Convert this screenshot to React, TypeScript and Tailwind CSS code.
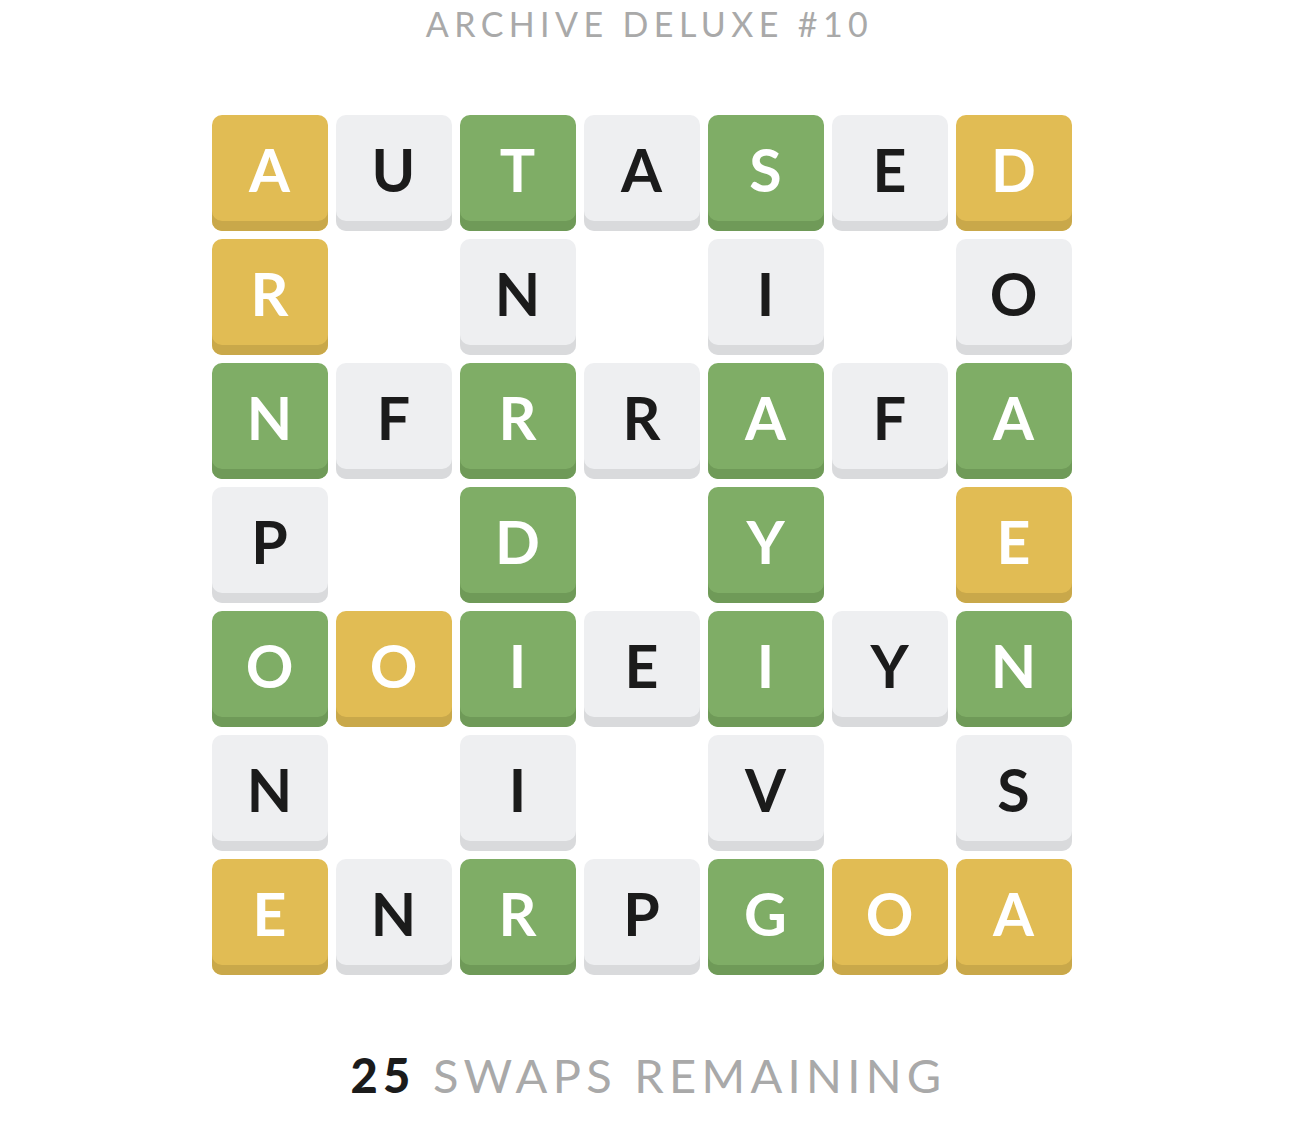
import React from 'react';

type Tone = 'y' | 'g' | 'G' | '';

const rows: [string, Tone][][] = [
  [['A', 'y'], ['U', 'g'], ['T', 'G'], ['A', 'g'], ['S', 'G'], ['E', 'g'], ['D', 'y']],
  [['R', 'y'], ['', ''], ['N', 'g'], ['', ''], ['I', 'g'], ['', ''], ['O', 'g']],
  [['N', 'G'], ['F', 'g'], ['R', 'G'], ['R', 'g'], ['A', 'G'], ['F', 'g'], ['A', 'G']],
  [['P', 'g'], ['', ''], ['D', 'G'], ['', ''], ['Y', 'G'], ['', ''], ['E', 'y']],
  [['O', 'G'], ['O', 'y'], ['I', 'G'], ['E', 'g'], ['I', 'G'], ['Y', 'g'], ['N', 'G']],
  [['N', 'g'], ['', ''], ['I', 'g'], ['', ''], ['V', 'g'], ['', ''], ['S', 'g']],
  [['E', 'y'], ['N', 'g'], ['R', 'G'], ['P', 'g'], ['G', 'G'], ['O', 'y'], ['A', 'y']],
];

const toneClass: Record<string, string> = {
  y: 'bg-[#e1bc54] text-white shadow-[inset_0_-10px_0_#c9a84a]',
  G: 'bg-[#7fad66] text-white shadow-[inset_0_-10px_0_#6f9a58]',
  g: 'bg-[#eeeff1] text-[#1b1b1b] shadow-[inset_0_-10px_0_#d9dadc]',
};

const Tile = ({ letter, tone }: { letter: string; tone: Tone }) => {
  if (!tone) return <div className="w-[116px] h-[116px]" />;
  return (
    <div
      className={`w-[116px] h-[116px] rounded-[10px] flex items-center justify-center pb-[8px] text-[59px] font-bold leading-none ${toneClass[tone]}`}
    >
      {letter}
    </div>
  );
};

export default function App() {
  return (
    <div
      className="w-full min-h-[1148px] bg-white flex flex-col items-center pr-[33px]"
      style={{ fontFamily: 'Lato, "Open Sans", sans-serif' }}
    >
      <h1 className="mt-[4px] text-[34px] tracking-[5.4px] text-[#a9a9a9] font-normal leading-[40px] pl-[16px]">
        ARCHIVE DELUXE #10
      </h1>

      <div className="mt-[71px] grid grid-cols-7 gap-[8px]">
        {rows.map((row, r) =>
          row.map(([letter, tone], c) => <Tile key={`${r}-${c}`} letter={letter} tone={tone} />)
        )}
      </div>

      <p className="mt-[72px] text-[47px] tracking-[5.3px] leading-[56px] pl-[14px]">
        <span className="font-black text-[#1b1b1b]">25</span>
        <span className="text-[#a9a9a9]"> SWAPS REMAINING</span>
      </p>
    </div>
  );
}
